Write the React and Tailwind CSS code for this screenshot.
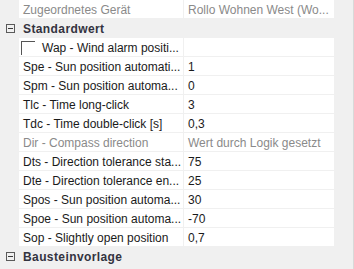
import React from 'react';

const rows = [
  { type: 'prop', name: 'Zugeordnetes Gerät', value: 'Rollo Wohnen West (Wo...', muted: true },
  { type: 'cat', name: 'Standardwert' },
  { type: 'prop', name: 'Wap - Wind alarm positi...', value: '', check: true },
  { type: 'prop', name: 'Spe - Sun position automati...', value: '1' },
  { type: 'prop', name: 'Spm - Sun position automa...', value: '0' },
  { type: 'prop', name: 'Tlc - Time long-click', value: '3' },
  { type: 'prop', name: 'Tdc - Time double-click [s]', value: '0,3' },
  { type: 'prop', name: 'Dir - Compass direction', value: 'Wert durch Logik gesetzt', muted: true },
  { type: 'prop', name: 'Dts - Direction tolerance sta...', value: '75' },
  { type: 'prop', name: 'Dte - Direction tolerance en...', value: '25' },
  { type: 'prop', name: 'Spos - Sun position automa...', value: '30' },
  { type: 'prop', name: 'Spoe - Sun position automa...', value: '-70' },
  { type: 'prop', name: 'Sop - Slightly open position', value: '0,7' },
  { type: 'cat', name: 'Bausteinvorlage' },
];

const MinusBox = () => (
  <div className="w-[9px] h-[9px] border border-[#5a5a5a] flex items-center justify-center">
    <div className="w-[5px] h-px bg-[#3a3a3a]" />
  </div>
);

const Row = ({ row }) => {
  if (row.type === 'cat') {
    return (
      <div className="flex items-center h-[19px] bg-[#f0f0f0]">
        <div className="w-[19px] flex justify-center pl-px">
          <MinusBox />
        </div>
        <div className="pl-[4px] pt-px font-bold tracking-[0.4px] text-[#33333f]">{row.name}</div>
      </div>
    );
  }
  const color = row.muted ? 'text-[#8a8a8a]' : 'text-[#1a1a1a]';
  return (
    <div className="flex h-[19px]">
      <div className="w-[19px] bg-[#f0f0f0]" />
      <div className={`w-[165px] flex items-center pt-px bg-white border-r border-b border-[#f0f0f0] whitespace-nowrap overflow-hidden ${color}`}>
        {row.check ? (
          <>
            <div className="ml-[2px] w-[14px] h-[14px] border-t border-l border-[#555]" />
            <span className="pl-[7px]">{row.name}</span>
          </>
        ) : (
          <span className="pl-[4px]">{row.name}</span>
        )}
      </div>
      <div className={`flex-1 flex items-center pt-px bg-white border-b border-[#f0f0f0] whitespace-nowrap overflow-hidden pl-[4px] ${color}`}>
        {row.value}
      </div>
    </div>
  );
};

export default function App() {
  return (
    <div className="w-[354px] h-[269px] flex bg-[#f0f0f0] overflow-hidden text-[12px] leading-none" style={{ fontFamily: '"Liberation Sans", Arial, sans-serif' }}>
      <div className="w-[334px] flex flex-col">
        {rows.map((r, i) => (
          <Row key={i} row={r} />
        ))}
      </div>
      <div className="flex-1 border-r border-[#d9d9d9]" />
    </div>
  );
}
